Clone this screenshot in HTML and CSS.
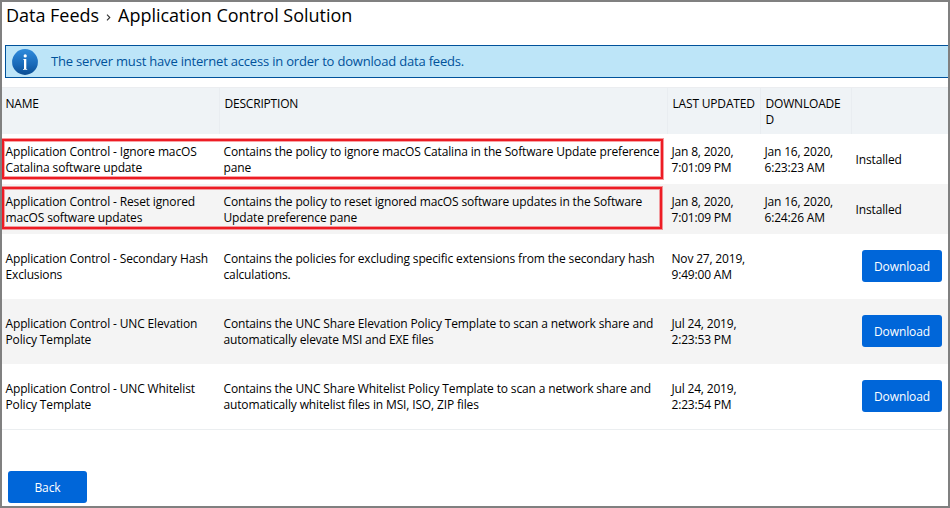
FILE: index.html
```html
<!DOCTYPE html>
<html lang="en">
<head>
<meta charset="utf-8">
<title>Data Feeds</title>
<link rel="stylesheet" href="styles.css">
</head>
<body>
<main class="page">
  <h1 class="crumbs"><span class="crumb-root">Data Feeds</span><svg class="chevron" width="5" height="7" viewBox="0 0 5 7"><path d="M1 .6 3.8 3.5 1 6.4" fill="none" stroke="#333" stroke-width="1.1"/></svg><span class="crumb-current">Application Control Solution</span></h1>
  <div class="notice">
    <svg class="info" width="26" height="26" viewBox="0 0 26 26">
      <defs><linearGradient id="g" x1="0" y1="0" x2="0" y2="1"><stop offset="0" stop-color="#2f8bdc"/><stop offset=".6" stop-color="#1869b8"/><stop offset="1" stop-color="#0b4d93"/></linearGradient></defs>
      <circle cx="13" cy="13" r="12.9" fill="url(#g)"/>
      <circle cx="13.2" cy="6.9" r="1.6" fill="#fff"/>
      <path d="M11.2 10h3.1v10h.9v.8h-4.2V20h1v-9.2h-.8z" fill="#fff"/>
    </svg>
    <span class="notice-text">The server must have internet access in order to download data feeds.</span>
  </div>
  <section class="table">
    <div class="row head">
      <div>NAME</div><div>DESCRIPTION</div><div>LAST UPDATED</div><div>DOWNLOADE<br>D</div><div></div>
    </div>
    <div class="row">
      <div>Application Control - Ignore macOS<br>Catalina software update</div>
      <div>Contains the policy to ignore macOS Catalina in the Software Update preference<br>pane</div>
      <div>Jan 8, 2020,<br>7:01:09 PM</div><div>Jan 16, 2020,<br>6:23:23 AM</div><div class="status">Installed</div>
      <i class="mark"></i>
    </div>
    <div class="row alt">
      <div>Application Control - Reset ignored<br>macOS software updates</div>
      <div>Contains the policy to reset ignored macOS software updates in the Software<br>Update preference pane</div>
      <div>Jan 8, 2020,<br>7:01:09 PM</div><div>Jan 16, 2020,<br>6:24:26 AM</div><div class="status">Installed</div>
      <i class="mark second"></i>
    </div>
    <div class="row tall">
      <div>Application Control - Secondary Hash<br>Exclusions</div>
      <div>Contains the policies for excluding specific extensions from the secondary hash<br>calculations.</div>
      <div>Nov 27, 2019,<br>9:49:00 AM</div><div></div><div class="action"><button class="btn">Download</button></div>
    </div>
    <div class="row tall alt">
      <div>Application Control - UNC Elevation<br>Policy Template</div>
      <div>Contains the UNC Share Elevation Policy Template to scan a network share and<br>automatically elevate MSI and EXE files</div>
      <div>Jul 24, 2019,<br>2:23:53 PM</div><div></div><div class="action"><button class="btn">Download</button></div>
    </div>
    <div class="row tall">
      <div>Application Control - UNC Whitelist<br>Policy Template</div>
      <div>Contains the UNC Share Whitelist Policy Template to scan a network share and<br>automatically whitelist files in MSI, ISO, ZIP files</div>
      <div>Jul 24, 2019,<br>2:23:54 PM</div><div></div><div class="action"><button class="btn">Download</button></div>
    </div>
  </section>
  <button class="btn back">Back</button>
</main>
</body>
</html>
```
FILE: styles.css
```css
* { box-sizing: border-box; }
body { margin: 0; background: #fff; color: #000; font: 12px/16px "Open Sans", sans-serif; }
.page { width: 950px; height: 508px; border: 2px solid #808080; overflow: hidden; }
.crumbs { display: flex; align-items: center; height: 43px; margin: 0; padding: 0 0 17px 4px; font-size: 18px; line-height: 24px; font-weight: 400; letter-spacing: -.02px; white-space: nowrap; }
.chevron { margin: 5px 7px 0 7px; }
.notice { display: flex; align-items: center; height: 33px; margin-left: 3px; padding-left: 6px; border: 1px solid #00529b; border-right: 0; background: #bde5f8; color: #00529b; font-size: 13px; letter-spacing: -.19px; white-space: nowrap; }
.notice-text { padding-bottom: 2px; }
.info { margin-right: 13px; }
.table { margin-top: 9px; border-bottom: 1px solid #ebeef0; letter-spacing: -.145px; }
.row { position: relative; display: grid; grid-template-columns: 218px 448px 93px 91px 96px; height: 50px; white-space: nowrap; }
.row > div { padding: 10px 0 0 3.5px; }
.row.head { height: 47px; background: #eff3f6; border-top: 1px solid #ebedf0; letter-spacing: -.2px; }
.row.head > div { padding-top: 8px; border-right: 1px solid #e9edf1; padding-left: 4.5px; }
.row.head > div:first-child { padding-left: 3.5px; }
.row.head > div:last-child { border: 0; }
.row.alt { background: #f4f4f4; }
.row.tall { height: 65px; }
.row.tall > div { padding-top: 17px; }
.row > div:nth-child(3), .row > div:nth-child(4) { letter-spacing: -.18px; }
.row > .status { padding-top: 18px; }
.row.tall > .action { padding: 16px 0 0 10px; }
.btn { display: block; width: 80px; height: 32px; padding: 0; border: 0; border-radius: 3px; background: #0066d9; color: #fff; font: 12px/34px "Open Sans", sans-serif; letter-spacing: -.1px; }
.back { width: 79px; margin: 41px 0 0 6px; }
.mark { position: absolute; left: 0; top: 5px; width: 661px; height: 40px; border: 2px solid #ed1c24; outline: 1px solid rgba(237,28,36,.45); box-shadow: inset 0 0 0 1px rgba(237,28,36,.4); }
.mark.second { width: 660px; top: 3px; height: 42px; }
```
